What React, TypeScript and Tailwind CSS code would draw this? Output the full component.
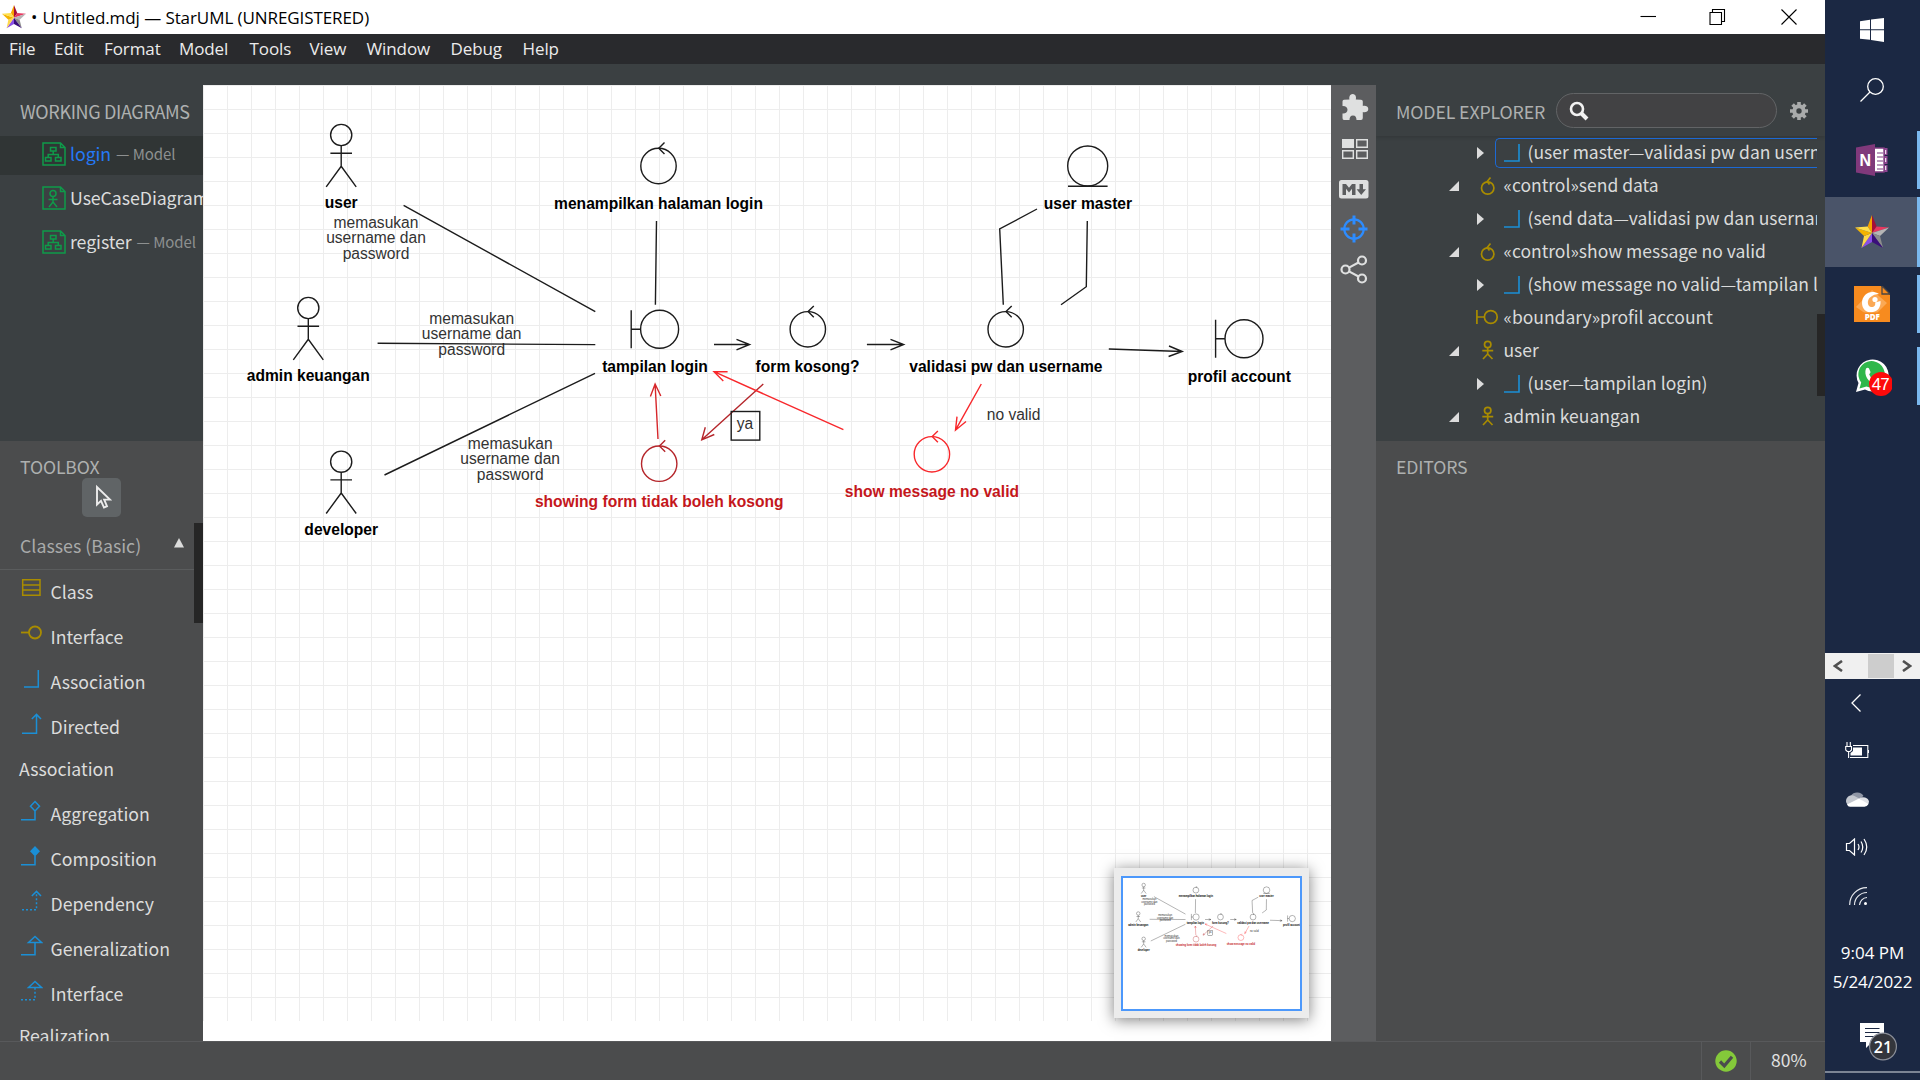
import React from "react";

type Kids = { children?: React.ReactNode };

/* ---------- logos and icons ---------- */

function Star({ size }: { size: number }) {
  return (
    <svg width={size} height={size} viewBox="0 0 34 34" className="shrink-0">
      <path d="M17 0L12.6 11.5L17 18Z" fill="#f7a400" />
      <path d="M17 0L21.6 11.5L17 18Z" fill="#a50f37" />
      <path d="M21.6 11.5L34 12.5L17 18Z" fill="#e8375f" />
      <path d="M34 12.5L25 21L17 18Z" fill="#b5b5b5" />
      <path d="M25 21L28 33L17 18Z" fill="#8d8d8d" />
      <path d="M28 33L17 27L17 18Z" fill="#3a0f7a" />
      <path d="M17 27L6.5 33L17 18Z" fill="#8a4fe6" />
      <path d="M6.5 33L9 21L17 18Z" fill="#ffd84a" />
      <path d="M9 21L0 12.5L17 18Z" fill="#f5b400" />
      <path d="M0 12.5L12.6 11.5L17 18Z" fill="#ffe04d" />
    </svg>
  );
}

function DiagramIcon({ actor }: { actor?: boolean }) {
  return (
    <svg width="24" height="24" viewBox="0 0 24 24" fill="none" stroke="#0f9a4a" strokeWidth="1.5" className="mt-[2px] shrink-0">
      <path d="M1 1H18.5L23 5.5V23H1ZM18.5 1V5.5H23" />
      {actor ? (
        <>
          <circle cx="11" cy="7.5" r="3" />
          <path d="M11 10.5V16L7 21M11 16L15 21M6.5 13.5H15.5" />
        </>
      ) : (
        <>
          <path d="M8.5 5.5H14V9H8.5ZM3.5 15.5H9V19H3.5ZM13.5 15.5H19V19H13.5ZM11.2 9V12.5M6.2 15.5V12.5H16.3V15.5" />
        </>
      )}
    </svg>
  );
}

const gold = "#a98c00";
const blue = "#1b8fd6";

function ToolIcon({ kind }: { kind: string }) {
  const s = { fill: "none", strokeWidth: 1.5 } as const;
  return (
    <svg width="24" height="24" viewBox="0 0 24 24" className="shrink-0">
      {kind === "class" && <path d="M3.7 4.7H21V20.3H3.7ZM3.7 9.9H21M3.7 15.1H21" {...s} stroke={gold} />}
      {kind === "interface" && (
        <g {...s} stroke={gold} strokeWidth="1.8">
          <circle cx="16" cy="12.5" r="6" />
          <path d="M2 12.5H10" />
        </g>
      )}
      {kind === "association" && <path d="M5 22H19.3V5" {...s} stroke={blue} />}
      {kind === "directed" && <path d="M3 23.3H17.5V5M12.8 9L17.5 4.4L22 9" {...s} stroke={blue} />}
      {kind === "aggregation" && <path d="M2 22.8H16V14M16 4.5L20.5 9.2L16 14L11.5 9.2Z" {...s} stroke={blue} />}
      {kind === "composition" && (
        <>
          <path d="M2 22.8H16V14" {...s} stroke={blue} />
          <path d="M16 4L21 9.2L16 14.4L11 9.2Z" fill={blue} />
        </>
      )}
      {kind === "dependency" && (
        <>
          <path d="M3 22.8H17.5V5" {...s} stroke={blue} strokeDasharray="2 2" />
          <path d="M12.8 9L17.5 4.4L22 9" {...s} stroke={blue} />
        </>
      )}
      {kind === "generalization" && <path d="M2 22.8H16V10.5M9.5 10.5L16 4.5L22.5 10.5Z" {...s} stroke={blue} />}
      {kind === "realization" && (
        <>
          <path d="M2 22.8H16V10.5" {...s} stroke={blue} strokeDasharray="2 2" />
          <path d="M9.5 10.5L16 4.5L22.5 10.5Z" {...s} stroke={blue} />
        </>
      )}
    </svg>
  );
}

/* ---------- diagram ---------- */

const sans = "'Liberation Sans', Arial, sans-serif";

function Actor({ x, y, label }: { x: number; y: number; label: string }) {
  return (
    <>
      <circle cx={x} cy={y} r="10.6" />
      <path d={`M${x} ${y + 10.6}V${y + 31.3}M${x - 10.8} ${y + 18.2}H${x + 10.8}M${x - 15} ${y + 51.8}L${x} ${y + 31.3}L${x + 15} ${y + 51.8}`} />
      <Label x={x} y={y + 73.2}>{label}</Label>
    </>
  );
}

function Label({ x, y, color = "#000", children }: Kids & { x: number; y: number; color?: string }) {
  return (
    <text x={x} y={y} textAnchor="middle" fill={color} stroke="none" fontFamily={sans} fontWeight="700" fontSize="15.6">
      {children}
    </text>
  );
}

function Note({ x, y, children }: Kids & { x: number; y: number }) {
  return (
    <text x={x} y={y} textAnchor="middle" fill="#333" stroke="none" fontFamily={sans} fontSize="15.6">
      {children}
    </text>
  );
}

function CredentialNote({ x, y }: { x: number; y: number }) {
  return (
    <>
      <Note x={x} y={y}>memasukan</Note>
      <Note x={x} y={y + 15.2}>username dan</Note>
      <Note x={x} y={y + 31}>password</Note>
    </>
  );
}

function Control({ x, y }: { x: number; y: number }) {
  return (
    <>
      <circle cx={x} cy={y} r="17.7" />
      <path d={`M${x + 6} ${y - 23.4}L${x + 0.3} ${y - 17.7}L${x + 6} ${y - 12}`} />
    </>
  );
}

function Boundary({ x, y }: { x: number; y: number }) {
  return (
    <>
      <circle cx={x} cy={y} r="19" />
      <path d={`M${x - 28.4} ${y - 19}V${y + 19}M${x - 28.4} ${y}H${x - 19}`} />
    </>
  );
}

function Diagram({ line }: { line: number }) {
  return (
    <g fill="none" stroke="#1c1c1c" strokeWidth={line}>
      <Actor x={341.2} y={135} label="user" />
      <Actor x={308.3} y={308} label="admin keuangan" />
      <Actor x={341.2} y={461.7} label="developer" />
      <CredentialNote x={376} y={228} />
      <CredentialNote x={471.7} y={324} />
      <CredentialNote x={510.2} y={449.2} />

      <path d="M403.6 205.3L595.3 311.7M377.6 343.3L595.3 344.6M384.5 475L595 373.3" />
      <path d="M656.5 221L655.4 304.7M1037 209L999.7 229L1003.3 304.7M1087.3 221L1086.3 286.7L1061 304.7" />
      <path d="M714 344.5H749.6M736.5 339.3L749.6 344.5L736.5 349.8" />
      <path d="M866.9 344.5H903.7M890.5 339.3L903.7 344.5L890.5 349.8" />
      <path d="M1108.8 349L1182.2 351.5M1169 346L1182.2 351.5L1168.6 356.5" />

      <Control x={658.5} y={166} />
      <Label x={658.5} y={209}>menampilkan halaman login</Label>
      <circle cx="1087.7" cy="166" r="20" />
      <path d="M1068 186.2H1107.6" />
      <Label x={1087.9} y={209}>user master</Label>
      <Boundary x={659.6} y={329.3} />
      <Label x={655} y={372}>tampilan login</Label>
      <Control x={807.8} y={329.3} />
      <Label x={807.6} y={372}>form kosong?</Label>
      <Control x={1005.7} y={329.3} />
      <Label x={1005.9} y={372}>validasi pw dan username</Label>
      <Boundary x={1244} y={338.7} />
      <Label x={1239.3} y={382.3}>profil account</Label>

      <g stroke="#d6272b">
        <path d="M658 439L655.1 384M650.4 396.5L655.1 384L660.8 396" />
      </g>
      <g stroke="#b5262b">
        <Control x={659.2} y={463.7} />
        <path d="M763.3 384L701.8 439.8M705.3 427.3L701.8 439.8L714.3 434.5" />
      </g>
      <g stroke="#f8282c">
        <path d="M843.4 429.7L714 371.7M727.6 371.7L714 371.7L723.3 381" />
        <path d="M981.3 384L955.5 430.2M957 416.7L955.5 430.2L966 421.5" />
        <Control x={931.9} y={454.3} />
      </g>
      <Label x={659.2} y={507.3} color="#c4171c">showing form tidak boleh kosong</Label>
      <Label x={931.9} y={497.3} color="#c4171c">show message no valid</Label>
      <rect x="731.2" y="411.5" width="28.6" height="28.6" />
      <Note x={745} y={429.3}>ya</Note>
      <Note x={1013.6} y={420}>no valid</Note>
    </g>
  );
}

function Canvas() {
  return (
    <main className="relative w-[1128px] shrink-0 overflow-hidden bg-white">
      <svg width="1128" height="956" viewBox="203 85 1128 956" className="block">
        <defs>
          <pattern id="grid" x="203" y="85" width="24" height="24" patternUnits="userSpaceOnUse">
            <path d="M0.5 0V24M0 0.5H24" stroke="#ededed" strokeWidth="1" />
          </pattern>
        </defs>
        <rect x="203" y="85" width="1128" height="936" fill="url(#grid)" />
        <Diagram line={1.4} />
      </svg>
      <div className="absolute top-[783px] left-[911px] h-[150px] w-[195px] bg-[#ececec] px-[7px] py-2 shadow-[0_2px_14px_rgba(0,0,0,0.5)]">
        <svg width="181" height="135" viewBox="1121 876 181 135" className="block bg-white">
          <g transform="translate(1087.5 862.8) scale(0.1646)">
            <Diagram line={2} />
          </g>
          <rect x="1122" y="877" width="179" height="133" fill="none" stroke="#4c98fb" strokeWidth="2" />
        </svg>
      </div>
    </main>
  );
}

/* ---------- left side ---------- */

function WorkingDiagrams() {
  const rows = [
    { name: "login", owner: "— Model", active: true },
    { name: "UseCaseDiagram1", owner: "", actor: true },
    { name: "register", owner: "— Model" },
  ];
  return (
    <section className="h-[356px] overflow-hidden bg-[#3b4042] pt-[11px]">
      <h2 className="pl-5 text-[18px] leading-[30px] tracking-[-0.35px] whitespace-nowrap text-[#aeb0b0]">WORKING DIAGRAMS</h2>
      <ul className="mt-[10px] flex flex-col gap-[5px]">
        {rows.map((r) => (
          <li key={r.name} className={"flex h-[39px] items-center pb-[5px] pl-[42px] whitespace-nowrap " + (r.active ? "bg-[#303535]" : "")}>
            <DiagramIcon actor={r.actor} />
            <span className={"ml-[4px] text-[17.8px] leading-[30px] tracking-[-0.1px] " + (r.active ? "text-[#2479f5]" : "text-[#dcdddd]")}>{r.name}</span>
            <span className="ml-[5px] pt-[1px] text-[15px] leading-[30px] tracking-[-0.1px] text-[#8d9090]">{r.owner}</span>
          </li>
        ))}
      </ul>
    </section>
  );
}

function Tool({ kind, children }: Kids & { kind: string }) {
  return (
    <li className="flex h-[45px] items-center pl-[19px] text-[17.7px] leading-[30px] whitespace-nowrap text-[#dcdcdc]">
      <span className="mr-[7.500px] -mt-[10px]">
        <ToolIcon kind={kind} />
      </span>
      <span className="-mt-[1px]">{children}</span>
    </li>
  );
}

function WrappedLine({ children }: Kids) {
  return <li className="h-[42px] pl-[19px] text-[17.7px] leading-[38px] text-[#dcdcdc]">{children}</li>;
}

function Toolbox() {
  return (
    <section className="relative h-[600px] overflow-hidden bg-[#4b4c4d] pt-[10px]">
      <h2 className="pl-5 text-[17.7px] leading-[30px] tracking-[-0.15px] text-[#aeb0b0]">TOOLBOX</h2>
      <div className="mt-[-3px] flex justify-center">
        <div className="flex h-[39px] w-[39px] items-center justify-center rounded-[5px] bg-[#606466]">
          <svg width="17" height="26" viewBox="0 0 17 26" fill="none" stroke="#ececec" strokeWidth="1.9" className="-mt-[2px] ml-[4px]">
            <path d="M2 3V20.5L6 16.8L9 23.6L12 22.2L9.2 15.6H15Z" />
          </svg>
        </div>
      </div>
      <div className="mr-[9px] flex h-[53px] items-center justify-between border-b border-[#5a5c5d] pr-[10px] pl-5 text-[17.8px] text-[#a9aaaa]">
        <span className="pt-[3px] leading-[30px]">Classes (Basic)</span>
        <svg width="10" height="10" viewBox="0 0 10 10" className="mb-[1px]">
          <path d="M5 0L10 9.5H0Z" fill="#dcdcdc" />
        </svg>
      </div>
      <ul className="-mt-[1px]">
        <Tool kind="class">Class</Tool>
        <Tool kind="interface">Interface</Tool>
        <Tool kind="association">Association</Tool>
        <Tool kind="directed">Directed</Tool>
        <WrappedLine>Association</WrappedLine>
        <Tool kind="aggregation">Aggregation</Tool>
        <Tool kind="composition">Composition</Tool>
        <Tool kind="dependency">Dependency</Tool>
        <Tool kind="generalization">Generalization</Tool>
        <Tool kind="realization">Interface</Tool>
        <WrappedLine>Realization</WrappedLine>
      </ul>
      <div className="absolute top-[82px] right-0 h-[100px] w-[9px] bg-[#262626]" />
    </section>
  );
}

/* ---------- right side ---------- */

function Toolbar() {
  return (
    <aside className="flex w-[45px] shrink-0 flex-col items-center bg-[#5c5d5f] pt-[8px]">
      <svg width="28" height="28" viewBox="0 0 28 28" fill="#dfe0e0" className="ml-[3px]">
        <path d="M1.500 8.500Q1.500 7 3 6.700L8.500 6.500C8 5 8.300 1 11.700 1S15.400 5 14.800 6.500L20 6.700Q21.800 7 21.800 8.500V13C24 12.300 27.300 13 27.300 16S24 19.600 21.800 19V25Q21.800 27 20 27H15.500C15.500 24.500 14.500 22.500 12 22.500S8.500 24.500 8.500 27H3Q1.500 27 1.500 25V20.500C4.500 20.800 6.500 19 6.500 16.700S4.500 12.800 1.500 13Z" />
      </svg>
      <svg width="26" height="20" viewBox="0 0 26 20" className="mt-[18px] ml-[3px]">
        <path d="M0 0H12V9H0Z" fill="#dfe0e0" />
        <path d="M14.700 0.700H25.300V8.300H14.700ZM0.700 11.700H11.300V19.300H0.700ZM14.700 11.700H25.300V19.300H14.700Z" fill="none" stroke="#dfe0e0" strokeWidth="1.400" />
      </svg>
      <svg width="30" height="19" viewBox="0 0 30 19" className="mt-[21px]">
        <rect width="29.500" height="18.500" rx="2.500" fill="#dfe0e0" />
        <path d="M3.500 15V4H7L10 7.800L13 4H16.500V15H13V8.800L10 12.500L7 8.800V15ZM20.500 4H24V9.300H27L22.200 15L17.600 9.300H20.500Z" fill="#5c5d5f" />
      </svg>
      <svg width="28" height="28" viewBox="0 0 28 28" fill="none" stroke="#2d8cff" className="mt-[16px]">
        <circle cx="14" cy="14" r="9.700" strokeWidth="2.200" />
        <path d="M14 0.500V9.500M14 18.500V27.500M0.500 14H9.500M18.500 14H27.500" strokeWidth="3" />
      </svg>
      <svg width="28" height="29" viewBox="0 0 28 29" fill="none" stroke="#dfe0e0" strokeWidth="2.200" className="mt-[12px]">
        <circle cx="5.500" cy="14.500" r="4" />
        <circle cx="22" cy="5.500" r="4" />
        <circle cx="22" cy="23.500" r="4" />
        <path d="M9 12.600L18.500 7.500M9 16.400L18.500 21.500" />
      </svg>
    </aside>
  );
}

function TreeChild({ selected, children }: Kids & { selected?: boolean }) {
  return (
    <li className="flex h-[33px] items-center pl-[101px]">
      <svg width="7" height="12" viewBox="0 0 7 12" className="shrink-0">
        <path d="M0 0L7 6L0 12Z" fill="#dcdcdc" />
      </svg>
      <div className={"ml-[11px] flex h-[30px] flex-1 items-center rounded-l-[5px] border border-r-0 pl-[8px] whitespace-nowrap " + (selected ? "border-[#1c69d4]" : "border-transparent")}>
        <svg width="16" height="18" viewBox="0 0 16 18" fill="none" stroke={blue} strokeWidth="1.6" className="mr-[7.500px] shrink-0">
          <path d="M0 17H15V0" />
        </svg>
        <span className="-mt-[1px]">{children}</span>
      </div>
    </li>
  );
}

function TreeNode({ kind, children }: Kids & { kind: "control" | "boundary" | "actor" }) {
  return (
    <li className="flex h-[33px] items-center pl-[73px] whitespace-nowrap">
      <svg width="10" height="10" viewBox="0 0 10 10" className="mr-[17px] shrink-0">
        {kind !== "boundary" && <path d="M10 0V10H0Z" fill="#dcdcdc" />}
      </svg>
      <svg width="24" height="24" viewBox="0 0 24 24" fill="none" stroke={gold} strokeWidth="1.7" className="mr-[3.500px] shrink-0">
        {kind === "control" && (
          <>
            <circle cx="11.700" cy="14" r="6.200" />
            <path d="M14.500 3.500L11.200 7.500L13.500 10.500" />
          </>
        )}
        {kind === "boundary" && (
          <>
            <circle cx="14.800" cy="11" r="6.400" />
            <path d="M0.900 4V18M1 11H8.500" />
          </>
        )}
        {kind === "actor" && (
          <>
            <circle cx="11.700" cy="5.500" r="3.200" />
            <path d="M11.700 9V15L7 20M11.700 15L16.500 20M6.300 11.700H17.200" />
          </>
        )}
      </svg>
      <span className="-mt-[1px]">{children}</span>
    </li>
  );
}

function ModelExplorer() {
  return (
    <section className="relative h-[356px] overflow-hidden bg-[#3b4042]">
      <div className="flex h-[51px] items-center pb-[1px] pl-5 shadow-[0_2px_3px_rgba(0,0,0,0.12)]">
        <h2 className="w-[160px] shrink-0 pt-[2px] text-[17.8px] leading-[30px] tracking-[-0.15px] whitespace-nowrap text-[#aeb0b0]">MODEL EXPLORER</h2>
        <div className="flex h-[35px] w-[221px] items-center rounded-full border border-[#626466] bg-[#424244] pl-3">
          <svg width="20" height="20" viewBox="0 0 20 20" fill="none" stroke="#f2f2f2" className="mt-[2px]">
            <circle cx="8" cy="8" r="6" strokeWidth="2.600" />
            <path d="M12.500 12.500L18 18" strokeWidth="4" />
          </svg>
        </div>
        <svg width="18" height="18" viewBox="0 0 18 18" className="mt-[1px] ml-[12.500px]">
          <path d="M9 0V18M0 9H18M2.600 2.600L15.400 15.400M15.400 2.600L2.600 15.400" stroke="#a9abab" strokeWidth="3.600" />
          <circle cx="9" cy="9" r="4.700" fill="none" stroke="#a9abab" strokeWidth="4" />
          <circle cx="9" cy="9" r="2.700" fill="#3b4042" />
        </svg>
      </div>
      <ul className="w-[441px] overflow-hidden text-[17.5px] leading-[30px] text-[#dadbdb]">
        <TreeChild selected>(user master—validasi pw dan username)</TreeChild>
        <TreeNode kind="control">«control»send data</TreeNode>
        <TreeChild>(send data—validasi pw dan username)</TreeChild>
        <TreeNode kind="control">«control»show message no valid</TreeNode>
        <TreeChild>(show message no valid—tampilan login)</TreeChild>
        <TreeNode kind="boundary">«boundary»profil account</TreeNode>
        <TreeNode kind="actor">user</TreeNode>
        <TreeChild>(user—tampilan login)</TreeChild>
        <TreeNode kind="actor">admin keuangan</TreeNode>
      </ul>
      <div className="absolute top-[229px] right-0 h-[82px] w-[8px] bg-[#262626]" />
    </section>
  );
}

/* ---------- taskbar ---------- */

function TaskItem({ className, children }: Kids & { className: string }) {
  return (
    <div className={"flex shrink-0 items-center justify-center border-r-[3px] border-[#7ab8ee] pl-[2px] " + className}>{children}</div>
  );
}

function Taskbar() {
  return (
    <aside className="flex w-[95px] shrink-0 flex-col overflow-hidden bg-[#1b2843] font-['Open_Sans',sans-serif]">
      <div className="flex h-[60px] shrink-0 items-center pl-[35px]">
        <svg width="24" height="24" viewBox="0 0 24 24" fill="#fff">
          <path d="M0 3.200L10 1.800V11.200H0ZM11 1.600L24 0V11.200H11ZM0 12.200H10V21.800L0 20.700ZM11 12.200H24V24L11 22Z" />
        </svg>
      </div>
      <div className="flex h-[60px] shrink-0 items-center pl-[35px]">
        <svg width="24" height="24" viewBox="0 0 24 24" fill="none" stroke="#fff" strokeWidth="1.300">
          <circle cx="15.500" cy="8.500" r="7.800" />
          <path d="M10 14L0.500 23.500" />
        </svg>
      </div>
      <TaskItem className="mt-[11px] h-[58px]">
        <svg width="32" height="32" viewBox="0 0 32 32">
          <path d="M17 4H28V28H17Z" fill="#fff" />
          <path d="M28 4H31.500V11H28ZM28 12H31.500V20H28ZM28 21H31.500V28H28Z" fill="#8f4592" />
          <path d="M17 4H28V28H17" fill="none" stroke="#7d3a80" strokeWidth="1.400" />
          <path d="M21 9H27M21 13H27M21 17H27M21 21H27M21 25H27" stroke="#7d3a80" strokeWidth="1.200" />
          <path d="M29.700 6V10M29.700 14V18M29.700 22V26" stroke="#fff" strokeWidth="1" />
          <path d="M0 3.500L19 0V32L0 28.500Z" fill="#80397b" />
          <text x="9.300" y="21.500" textAnchor="middle" fontFamily={sans} fontWeight="700" fontSize="16" fill="#fff">N</text>
        </svg>
      </TaskItem>
      <TaskItem className="mt-2 h-[70px] bg-[#4a5469]">
        <Star size={34} />
      </TaskItem>
      <TaskItem className="mt-2 h-[58px]">
        <svg width="36" height="36" viewBox="0 0 36 36">
          <path d="M0 0H27L36 9V36H0Z" fill="#f78b1f" />
          <path d="M28 0L36 8H28Z" fill="#f78b1f" stroke="#4c4542" strokeWidth="1.300" />
          <path d="M18 4L33 17L18 32L2 21Z" fill="#fba955" />
          <path d="M25 8C17 3 8 8 8 17C8 24 14 27.500 19 26C24 25 27 21 26.500 15L21 16.500C22 19 20 21.500 17 21C13 20 13 14 16 11.500C18.500 9 22 8 25 8Z" fill="#fff" />
          <circle cx="21" cy="13.500" r="2.600" fill="#fff" />
          <rect x="9" y="26.500" width="19" height="8" fill="#f78b1f" />
          <text x="18.300" y="33.500" textAnchor="middle" fontFamily="'Open Sans', sans-serif" fontWeight="800" fontSize="8" fill="#fff">PDF</text>
        </svg>
      </TaskItem>
      <TaskItem className="mt-[14px] h-[58px]">
        <svg width="40" height="40" viewBox="0 0 40 40">
          <path d="M4 36L6.500 27A16 16 0 1 1 13 33.500Z" fill="#fff" />
          <path d="M7.500 32.500L9.200 26.500A13.200 13.200 0 1 1 14.500 30.500Z" fill="#2fb74b" />
          <path d="M14 12.500C15 11.500 16.500 11.500 17 12.500L18.500 16C18.500 17.200 17.200 18 17.200 18.600C18.500 21.500 20.500 23.500 23 24.600L23 28C16.500 27 11.500 19 14 12.500Z" fill="#fff" />
          <circle cx="29" cy="28" r="12" fill="#fd0a0a" />
          <text x="28.800" y="34" textAnchor="middle" fontFamily={sans} fontSize="17" fill="#fff" textLength="18">47</text>
        </svg>
      </TaskItem>
      <div className="mt-[248px] flex h-[26px] shrink-0 items-center bg-[#f0f0f0] pl-2">
        <svg width="10" height="12" viewBox="0 0 10 12" fill="none" stroke="#505050" strokeWidth="2.600">
          <path d="M9 1L2 6L9 11" />
        </svg>
        <div className="ml-[25px] h-[24px] w-[26px] bg-[#cdcdcd]" />
        <svg width="10" height="12" viewBox="0 0 10 12" fill="none" stroke="#505050" strokeWidth="2.600" className="ml-[8px]">
          <path d="M1 1L8 6L1 11" />
        </svg>
      </div>
      <svg width="10" height="18" viewBox="0 0 10 18" fill="none" stroke="#fff" strokeWidth="1.300" className="mt-[15px] ml-[26px] shrink-0">
        <path d="M9.500 0.500L1 9L9.500 17.500" />
      </svg>
      <svg width="24" height="16" viewBox="0 0 24 16" fill="none" stroke="#fff" strokeWidth="1.100" className="mt-[30px] ml-5 shrink-0">
        <path d="M8 3.500H22.800V15.500H5M23.500 8V11" />
        <path d="M8 5.500H17V13.500H5.500V11L8 9Z" fill="#fff" stroke="none" />
        <path d="M0.700 4.500H6.500V8L5 9.500H2.300L0.700 8ZM2 0V4.500M5.300 0V4.500M3.600 9.500V16" />
      </svg>
      <svg width="24" height="16" viewBox="0 0 24 16" className="mt-[33px] ml-5 shrink-0">
        <path d="M6 4.500A7 6 0 0 1 18.500 5L13 9Z" fill="#8f96a5" />
        <path d="M4 15A5.500 5.500 0 1 1 9.500 5L16 8.500L4 15Z" fill="#c4c8cf" />
        <path d="M14 7.500A6 5 0 0 1 24 10.500Q24 13 22 14.500Z" fill="#e0e2e6" />
        <path d="M2 13.500L14 7.500L23.300 13Q22 15.800 19.500 15.800H5Q3 15.800 2 13.500Z" fill="#fff" />
      </svg>
      <svg width="24" height="18" viewBox="0 0 24 18" fill="none" stroke="#fff" strokeWidth="1.200" className="mt-[31px] ml-5 shrink-0">
        <path d="M1.500 5.500H4.500L9.500 1V17L4.500 12.500H1.500Z" />
        <path d="M13 6Q15 9 13 12M16 3.500Q19.500 9 16 14.500M19 1Q24.500 9 19 17" />
      </svg>
      <svg width="19" height="19" viewBox="0 0 19 19" fill="none" stroke="#e8eaee" strokeWidth="1.200" className="mt-[31px] ml-6 shrink-0">
        <path d="M0.700 18A17 17 0 0 1 18 0.700M5.500 18A12.500 12.500 0 0 1 18 5.500M10.500 18A8 8 0 0 1 18 10.500" />
        <circle cx="16.500" cy="16.500" r="1.500" fill="#fff" stroke="none" />
      </svg>
      <div className="mt-[32px] shrink-0 text-center text-[17px] leading-[29px] whitespace-nowrap text-white">
        <div>9:04 PM</div>
        <div className="tracking-[-0.100px]">5/24/2022</div>
      </div>
      <svg width="40" height="40" viewBox="0 0 40 40" className="mt-[26px] ml-[33px] shrink-0">
        <path d="M2 1H26V20H14L8 26V20H2Z" fill="#fff" />
        <path d="M7 6.500H21.500M7 10.500H21.500M7 14.500H21.500" stroke="#1b2843" strokeWidth="1.200" />
        <circle cx="25" cy="24.500" r="13.400" fill="#34363c" stroke="#8b8f99" strokeWidth="1.200" />
        <text x="25" y="30.500" textAnchor="middle" fontFamily="'Open Sans', sans-serif" fontWeight="600" fontSize="16" fill="#fff">21</text>
      </svg>
      <div className="mt-[9px] h-[2px] shrink-0 bg-[#7b8494]" />
    </aside>
  );
}

/* ---------- window ---------- */

const menu = [
  { label: "File", cls: "w-[45px]" },
  { label: "Edit", cls: "w-[50px]" },
  { label: "Format", cls: "w-[75px]" },
  { label: "Model", cls: "w-[70.500px]" },
  { label: "Tools", cls: "w-[60px]" },
  { label: "View", cls: "w-[57px]" },
  { label: "Window", cls: "w-[84px]" },
  { label: "Debug", cls: "w-[72px]" },
  { label: "Help", cls: "w-[50px]" },
];

export default function App() {
  return (
    <div className="flex h-[1080px] w-[1920px] overflow-hidden font-['Noto_Sans_CJK_SC',sans-serif]">
      <div className="flex w-[1825px] shrink-0 flex-col">
        <header className="flex h-[34px] shrink-0 items-center bg-white pl-[2px] font-['Open_Sans',sans-serif]">
          <Star size={24} />
          <span className="ml-[5px] text-[17px] leading-[34px] text-black">•</span>
          <span className="ml-[5px] flex-1 pt-[1px] text-[17px] leading-[34px] tracking-[-0.080px] whitespace-nowrap text-black">
            Untitled.mdj — StarUML (UNREGISTERED)
          </span>
          <svg width="160" height="16" viewBox="0 0 160 16" fill="none" stroke="#000" strokeWidth="1.100" className="mr-[27px]">
            <path d="M2.500 7.500H18" />
            <path d="M72 3.500H83.500V15.500H72ZM74.500 3.500V0.500H86.500V12.500H83.500" />
            <path d="M143.500 0.500L158.500 15.500M158.500 0.500L143.500 15.500" />
          </svg>
        </header>
        <nav className="flex h-[30px] shrink-0 bg-[#292a2d] pl-[9px] font-['Open_Sans',sans-serif] text-[17px] leading-[30px] tracking-[-0.100px] text-[#ececec]">
          {menu.map((m) => (
            <span key={m.label} className={"shrink-0 " + m.cls}>{m.label}</span>
          ))}
        </nav>
        <div className="h-[21px] shrink-0 bg-[#3b4042]" />
        <div className="flex h-[956px] shrink-0">
          <aside className="w-[203px] shrink-0">
            <WorkingDiagrams />
            <Toolbox />
          </aside>
          <Canvas />
          <Toolbar />
          <aside className="flex w-[449px] shrink-0 flex-col">
            <ModelExplorer />
            <section className="flex-1 bg-[#4b4c4d] pt-[10px] pl-5">
              <h2 className="text-[17.7px] leading-[30px] tracking-[-0.15px] text-[#aeb0b0]">EDITORS</h2>
            </section>
          </aside>
        </div>
        <footer className="flex h-[39px] justify-end border-t border-[#58595b] bg-[#4b4c4d]">
          <div className="flex w-[49px] items-center justify-center border-l border-[#58595b]">
            <svg width="22" height="22" viewBox="0 0 22 22">
              <circle cx="11" cy="11" r="10.700" fill="#84c93a" />
              <path d="M5 11.500L9.300 15.800L17 6.800" fill="none" stroke="#4b4c4d" strokeWidth="3.200" />
            </svg>
          </div>
          <div className="w-[75px] border-l border-[#58595b] pl-[20px] text-[17.500px] leading-[36px] text-[#e0e0e0]">80%</div>
        </footer>
      </div>
      <Taskbar />
    </div>
  );
}
